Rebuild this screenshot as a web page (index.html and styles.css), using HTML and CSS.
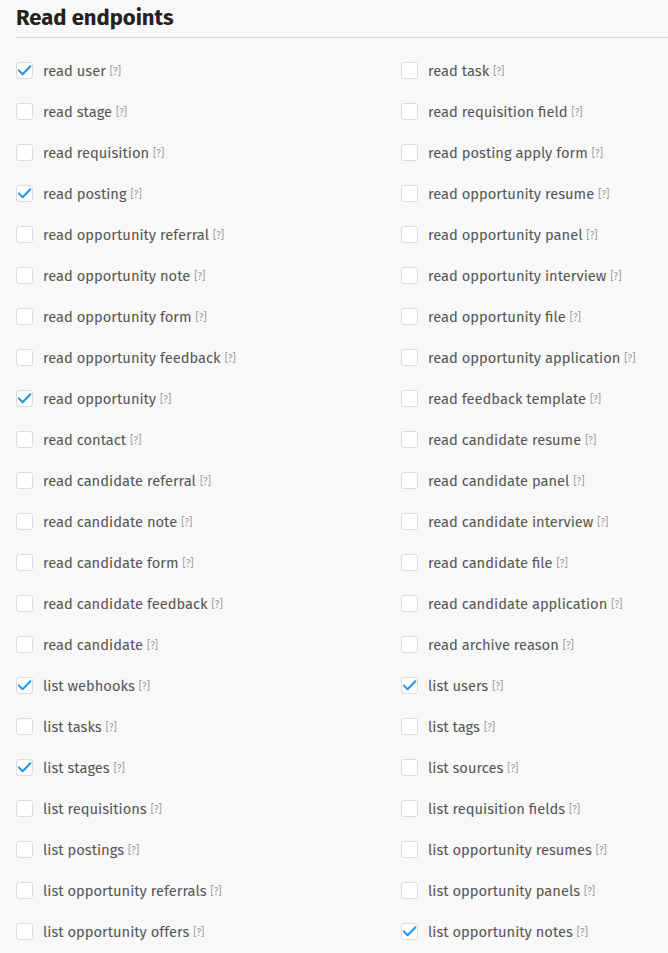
FILE: index.html
```html
<!DOCTYPE html>
<html>
<head>
<meta charset="utf-8">
<link rel="stylesheet" href="styles.css">
</head>
<body>
<section class="panel">
  <h2 class="title">Read endpoints</h2>
  <div class="grid" id="grid"></div>
</section>
<script>
const items = [
["read user",1],["read task",0],
["read stage",0],["read requisition field",0],
["read requisition",0],["read posting apply form",0],
["read posting",1],["read opportunity resume",0],
["read opportunity referral",0],["read opportunity panel",0],
["read opportunity note",0],["read opportunity interview",0],
["read opportunity form",0],["read opportunity file",0],
["read opportunity feedback",0],["read opportunity application",0],
["read opportunity",1],["read feedback template",0],
["read contact",0],["read candidate resume",0],
["read candidate referral",0],["read candidate panel",0],
["read candidate note",0],["read candidate interview",0],
["read candidate form",0],["read candidate file",0],
["read candidate feedback",0],["read candidate application",0],
["read candidate",0],["read archive reason",0],
["list webhooks",1],["list users",1],
["list tasks",0],["list tags",0],
["list stages",1],["list sources",0],
["list requisitions",0],["list requisition fields",0],
["list postings",0],["list opportunity resumes",0],
["list opportunity referrals",0],["list opportunity panels",0],
["list opportunity offers",0],["list opportunity notes",1]
];
const grid = document.getElementById('grid');
const check = '<svg viewBox="0 0 17 17" width="17" height="17"><path d="M2.8 8.4 L6.6 12.2 L14.4 4.2" fill="none" stroke="#1e96ef" stroke-width="2" stroke-linecap="round" stroke-linejoin="round"/></svg>';
items.forEach(([label, on]) => {
  const row = document.createElement('label');
  row.className = 'item';
  row.innerHTML = '<span class="box">' + (on ? check : '') + '</span><span class="text">' + label + '</span><span class="help">[?]</span>';
  grid.appendChild(row);
});
</script>
</body>
</html>
```
FILE: styles.css
```css
html, body {
  margin: 0;
  padding: 0;
  background: #f8f8f8;
  overflow: hidden;
}
body {
  font-family: "Fira Sans", "Open Sans", "Noto Sans", sans-serif;
  color: #4a4a4a;
}
.panel {
  padding: 0 0 0 16px;
}
.title {
  margin: 0;
  padding: 4px 0 6px 0;
  font-size: 22px;
  font-weight: 700;
  color: #222;
  line-height: 27px;
  border-bottom: 1px solid #d8d8d8;
}
.grid {
  display: grid;
  grid-template-columns: 385px minmax(0, 1fr);
  grid-auto-rows: 41px;
  padding-top: 12px;
}
.item {
  display: flex;
  align-items: center;
  font-size: 14.7px;
  white-space: nowrap;
}
.box {
  width: 15px;
  height: 15px;
  border: 1px solid #dcdcdc;
  border-radius: 3px;
  background: #fff;
  margin-right: 10px;
  position: relative;
  flex: none;
}
.box svg {
  position: absolute;
  left: -1px;
  top: -1px;
}
.text {
  color: #555;
}
.help {
  font-size: 10px;
  color: #999;
  margin-left: 4px;
  margin-top: 3px;
}
```
